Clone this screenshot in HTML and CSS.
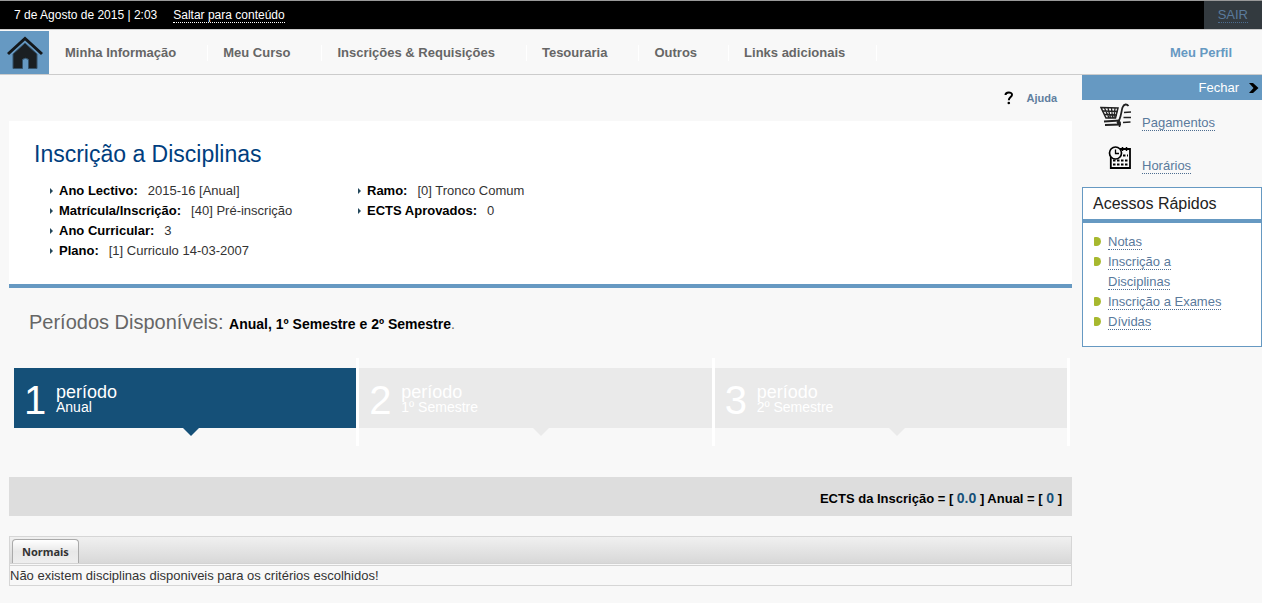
FILE: index.html
```html
<!DOCTYPE html>
<html lang="pt">
<head>
<meta charset="utf-8">
<title>Inscrição a Disciplinas</title>
<link rel="stylesheet" href="styles.css">
</head>
<body>
<header class="topbar">
  <div class="topbar-info">
    <span>7 de Agosto de 2015 | 2:03</span>
    <a class="skip" href="#conteudo">Saltar para conteúdo</a>
  </div>
  <div class="logout"><a class="dotted" href="#sair">SAIR</a></div>
</header>
<nav class="nav">
  <a class="home" href="#home" aria-label="Início">
    <svg width="36" height="34" viewBox="0 0 36 34">
      <path d="M1 18 18 2.500 35 18" fill="none" stroke="#14181b" stroke-width="3"/>
      <path d="M6 18 18 7 30 18V32.500H21.500V23.500Q18.500 21 15.500 23.500V32.500H6Z" fill="#1a1f22" stroke="#34536b" stroke-width="1"/>
    </svg>
  </a>
  <ul class="menu">
    <li><a href="#info">Minha Informação</a></li>
    <li><a href="#curso">Meu Curso</a></li>
    <li><a href="#inscricoes">Inscrições &amp; Requisições</a></li>
    <li><a href="#tesouraria">Tesouraria</a></li>
    <li><a href="#outros">Outros</a></li>
    <li><a href="#links">Links adicionais</a></li>
  </ul>
  <a class="profile" href="#perfil">Meu Perfil</a>
</nav>
<div class="page">
  <main class="main" id="conteudo">
    <div class="help">
      <svg width="10" height="14" viewBox="0 0 10 14"><path d="M1.500 4C1.500 .8 8 .6 8 3.700 8 6 4.800 6 4.800 9.300" fill="none" stroke="#000" stroke-width="2"/><circle cx="4.800" cy="12" r="1.300"/></svg>
      <a href="#ajuda">Ajuda</a>
    </div>
    <section class="summary">
      <h1>Inscrição a Disciplinas</h1>
      <div class="facts">
        <dl>
          <div><dt>Ano Lectivo:</dt><dd>2015-16 [Anual]</dd></div>
          <div><dt>Matrícula/Inscrição:</dt><dd>[40] Pré-inscrição</dd></div>
          <div><dt>Ano Curricular:</dt><dd>3</dd></div>
          <div><dt>Plano:</dt><dd>[1] Curriculo 14-03-2007</dd></div>
        </dl>
        <dl>
          <div><dt>Ramo:</dt><dd>[0] Tronco Comum</dd></div>
          <div><dt>ECTS Aprovados:</dt><dd>0</dd></div>
        </dl>
      </div>
    </section>
    <h2 class="periods">Períodos Disponíveis: <small><strong>Anual, 1º Semestre e 2º Semestre</strong>.</small></h2>
    <ol class="steps">
      <li><a class="step step-active" href="#p1"><span class="num">1</span><span class="label">período<small>Anual</small></span></a></li>
      <li><a class="step" href="#p2"><span class="num">2</span><span class="label">período<small>1º Semestre</small></span></a></li>
      <li><a class="step" href="#p3"><span class="num">3</span><span class="label">período<small>2º Semestre</small></span></a></li>
    </ol>
    <p class="ects">ECTS da Inscrição = [ <b>0.0</b> ] Anual = [ <b>0</b> ]</p>
    <section class="tabs">
      <div class="tab-strip" role="tablist"><button class="tab" type="button" role="tab" aria-selected="true">Normais</button></div>
      <p class="tab-body">Não existem disciplinas disponiveis para os critérios escolhidos!</p>
    </section>
  </main>
  <aside class="side">
    <button class="close" type="button">Fechar
      <svg width="10" height="10" viewBox="0 0 10 10"><path d="M0 0H4L9.500 5 4 10H0L4.500 5Z"/></svg>
    </button>
    <ul class="shortcuts">
      <li>
        <svg width="32" height="26" viewBox="0 0 32 26" fill="none" stroke="#222">
          <path d="M1 4.500 18 5 15.500 15 6 15Z" stroke-width="1.500"/>
          <path d="M4.500 5 9 15M8 5 10.500 15M11.500 5 12.500 15M15 5 14 15M2.500 8 17.500 8.500M4 11.500 17 12" stroke-width="1.300"/>
          <path d="M4 18.500 20 17.500M5 22 21 21.500" stroke-width="1.800"/>
          <path d="M17 20C21 17 21 9 22.500 4.500 24 .5 27 1 28.500 3" stroke-width="1.800"/>
          <circle cx="19" cy="20" r="2" fill="#222" stroke="none"/><path d="M19.500 21V24" stroke-width="1.500"/>
          <path d="M24 9.500 31 9M23.500 14.500H31M23 19.500 30.500 19" stroke-width="1.500"/>
        </svg>
        <a class="dotted" href="#pagamentos">Pagamentos</a>
      </li>
      <li>
        <svg width="24" height="24" viewBox="0 0 24 24" fill="none" stroke="#000">
          <path d="M2.800 11V22H22V3H12" stroke-width="1.800"/>
          <circle cx="7.500" cy="7" r="6" fill="#f8f8f8" stroke-width="1.700"/>
          <path d="M7.500 3.500V7.500H11" stroke-width="1.300"/>
          <path d="M14.500 1V5M18.500 1V5" stroke-width="1.500"/>
          <path d="M15 9.500H20M5 14.500H20M5 18.500H20" stroke-width="1.800" stroke-dasharray="2.500 1.500"/>
        </svg>
        <a class="dotted" href="#horarios">Horários</a>
      </li>
    </ul>
    <section class="quick">
      <h2>Acessos Rápidos</h2>
      <ul>
        <li><span><a class="dotted" href="#notas">Notas</a></span></li>
        <li><span><a class="dotted" href="#disciplinas">Inscrição a<br>Disciplinas</a></span></li>
        <li><span><a class="dotted" href="#exames">Inscrição a Exames</a></span></li>
        <li><span><a class="dotted" href="#dividas">Dívidas</a></span></li>
      </ul>
    </section>
  </aside>
</div>
</body>
</html>
```
FILE: styles.css
```css
* { box-sizing: border-box; }
body {
  margin: 0;
  background: #f8f8f8;
  color: #333;
  font: 13px/20px "Liberation Sans", Arial, sans-serif;
}
ul, ol, dl, dd, p, h1, h2 { margin: 0; padding: 0; }
h1, h2 { font-weight: normal; }
ul, ol { list-style: none; }
a { color: inherit; text-decoration: none; }
button { font: inherit; cursor: pointer; }
svg { display: block; flex: none; }

.dotted { color: #5a7a9c; border-bottom: 1px dotted #4d6d90; }

.topbar {
  display: flex;
  justify-content: space-between;
  height: 30px;
  background: #000;
  border-top: 1px solid #999;
  border-bottom: 1px solid #ccc;
  color: #fff;
  font-size: 12px;
}
.topbar-info { display: flex; align-items: center; gap: 16px; padding-left: 14px; }
.skip { line-height: 14px; border-bottom: 1px dotted #fff; }
.logout {
  padding: 4px 14px;
  background: #333a3f;
  font-size: 13px;
}

.nav {
  display: flex;
  align-items: center;
  height: 45px;
  padding-top: 1px;
  border-bottom: 1px solid #ccc;
  color: #666;
  font-weight: bold;
}
.home {
  display: flex;
  justify-content: center;
  align-items: center;
  width: 49px;
  height: 43px;
  background: #6699c2;
}
.menu { display: flex; }
.menu a { display: block; padding: 0 31px 0 16px; line-height: 16px; }
.menu li { border-right: 1px solid #fff; margin-right: -1px; }
.profile { margin-left: auto; padding-right: 30px; color: #6699c2; }

.page {
  display: grid;
  grid-template-columns: minmax(0, 1fr) 180px;
  gap: 10px;
  align-items: start;
  padding-left: 9px;
}

.help {
  display: flex;
  justify-content: flex-end;
  align-items: center;
  gap: 12px;
  height: 46px;
  padding-right: 15px;
  color: #5f7f9f;
  font-size: 11px;
  font-weight: bold;
}
.summary {
  padding: 18px 25px 23px;
  background: #fff;
  border-bottom: 4px solid #6699c2;
}
.summary h1 { color: #003e7e; font-size: 23px; line-height: 30px; }
.facts { display: flex; padding: 12px 0 0 16px; }
.facts dl { width: 308px; }
.facts dl > div { display: flex; align-items: center; gap: 10px; }
.facts dt { display: flex; align-items: center; gap: 6px; color: #000; font-weight: bold; }
.facts dt::before {
  content: "";
  border: solid transparent;
  border-width: 3px 0 3px 3px;
  border-left-color: #24485c;
}

.periods { padding: 19px 20px; color: #666; font-size: 20px; line-height: 30px; }
.periods small { font-size: 14px; }
.periods strong { color: #000; }

.steps { display: flex; padding: 0 2px 0 5px; }
.steps li { flex: 1 1 355px; padding: 10px 0 18px; border-right: 3px solid #fff; }
.steps li:first-child { flex-basis: 345px; }
.step {
  position: relative;
  display: flex;
  align-items: center;
  gap: 10px;
  height: 60px;
  padding: 3px 10px 0;
  background: #eaeaea;
  color: #fff;
}
.step::after {
  content: "";
  position: absolute;
  top: 100%;
  left: calc(50% - 2px);
  border: solid transparent;
  border-width: 8px 8px 0;
  border-top-color: #eaeaea;
}
.step-active { background: #155078; }
.step-active::after { border-top-color: #155078; }
.num { width: 22px; font-size: 40px; line-height: 40px; }
.label { font-size: 18px; line-height: 16px; }
.label small { display: block; font-size: 14px; line-height: 15px; }

.ects {
  margin-top: 31px;
  padding: 12px 10px 7px;
  background: #ddd;
  color: #000;
  font-weight: bold;
  text-align: right;
}
.ects b { color: #155078; font-size: 14px; line-height: 16px; }

.tabs { margin-top: 20px; border: 1px solid #d6d6d6; }
.tab-strip {
  display: flex;
  padding: 2px 2px 0;
  background: linear-gradient(#f0f0f0, #d8d8d8);
}
.tab {
  height: 24px;
  padding: 0 9px;
  background: linear-gradient(#fff, #e8e8e8 50%, #eee);
  border: 1px solid #aaa;
  border-bottom: 0;
  border-radius: 4px 4px 0 0;
  color: #333;
  font: bold 11px "Noto Sans", sans-serif;
}
.tab-body { border-top: 3px double #d3d3d3; line-height: 19px; }

.close {
  display: flex;
  justify-content: flex-end;
  align-items: center;
  gap: 10px;
  width: 100%;
  height: 25px;
  padding: 0 3px 0 0;
  background: #6699c2;
  border: 0;
  color: #fff;
}
.shortcuts { display: grid; gap: 15px; padding: 3px 0 13px; }
.shortcuts li { display: grid; grid-template-columns: 50px 1fr; column-gap: 10px; align-items: start; }
.shortcuts svg { justify-self: end; }
.shortcuts a { justify-self: start; margin-top: 12px; line-height: 15px; }
.quick { background: #fff; border: 1px solid #6699c2; }
.quick h2 { padding: 6px 10px 5px; border-bottom: 4px solid #6699c2; color: #222; font-size: 16px; line-height: 20px; }
.quick ul { padding: 9px 11px 14px; }
.quick li { display: flex; gap: 7px; }
.quick li::before {
  content: "";
  width: 7px;
  height: 9px;
  margin-top: 5px;
  background: #a7b82e;
  border-radius: 1px 5px 5px 1px;
}
```
